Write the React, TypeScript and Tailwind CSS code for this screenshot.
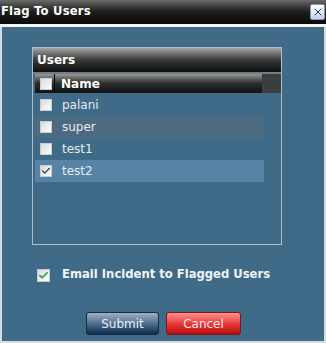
import { Check, X } from "lucide-react";

const users = [
  { name: "palani", checked: false, bg: "" },
  { name: "super", checked: false, bg: "bg-[#4d6b80]" },
  { name: "test1", checked: false, bg: "" },
  { name: "test2", checked: true, bg: "bg-[#5683a6]" },
];

const font = { fontFamily: "Verdana, 'DejaVu Sans', sans-serif" };

function Box({ checked }: { checked?: boolean }) {
  return (
    <div className="w-[12px] h-[12px] border border-[#c9ccd0] bg-gradient-to-br from-[#d8dadd] to-[#ffffff] flex items-center justify-center">
      {checked && <Check size={10} strokeWidth={3} className="text-[#333a66]" />}
    </div>
  );
}

export default function App() {
  return (
    <div className="w-[326px] h-[343px] flex flex-col bg-[#d5dde3]" style={font}>
      <div className="h-[24px] flex items-center justify-between bg-gradient-to-b from-[#6b6b6b] via-[#1c1c1c] to-[#0a0a0a] px-[1px]">
        <span className="text-white font-bold text-[11.6px] tracking-[0.2px]">Flag To Users</span>
        <div className="w-[15px] h-[16px] rounded-[2px] bg-gradient-to-b from-[#ffffff] to-[#c2d0e6] border border-[#8a9ab5] flex items-center justify-center">
          <X size={12} strokeWidth={2} className="text-[#2b3550]" />
        </div>
      </div>
      <div className="h-[3px] bg-[#f4f5f6]" />
      <div className="flex-1 mx-[2px] mb-[2px] bg-[#3f6b88] flex flex-col pl-[30px] pt-[20px]">
        <div className="w-[250px] h-[198px] border border-[#aebdc8] flex flex-col">
          <div className="h-[24px] bg-gradient-to-b from-[#a5a5a5] via-[#3a3a3a] to-[#101010] flex items-center pl-[4px]">
            <span className="text-white font-bold text-[12px]">Users</span>
          </div>
          <div className="h-[2px] bg-[#6c7e8a]" />
          <div className="flex pl-[2px]">
            <div className="w-[227px] h-[19px] bg-gradient-to-b from-[#9a9a9a] via-[#2c2c2c] to-[#121212] flex items-center">
              <div className="w-[19px] flex justify-center pl-[2px]">
                <Box />
              </div>
              <div className="w-[1px] h-full bg-black" />
              <span className="ml-[6px] text-white font-bold text-[12px]">Name</span>
            </div>
            <div className="w-[19px] h-[19px] bg-[#3c3d3e]" />
          </div>
          <div className="flex flex-col pl-[2px] pt-[1px]">
            {users.map((u) => (
              <div key={u.name} className={`w-[229px] h-[22px] flex items-center ${u.bg}`}>
                <div className="w-[19px] flex justify-center pl-[2px]">
                  <Box checked={u.checked} />
                </div>
                <span className="ml-[8px] text-[#e4ecf2] text-[12px]">{u.name}</span>
              </div>
            ))}
          </div>
        </div>
        <div className="flex items-center mt-[23px] ml-[5px] h-[14px]">
          <div className="w-[13px] h-[13px] bg-gradient-to-br from-[#d6d9dc] to-white border border-[#c8cbce] flex items-center justify-center">
            <Check size={11} strokeWidth={3.5} className="text-[#23a03a]" />
          </div>
          <span className="ml-[12px] text-[#f0f4f7] font-bold text-[11.6px]">Email Incident to Flagged Users</span>
        </div>
        <div className="flex mt-[30px] ml-[54px] gap-[7px]">
          <button className="w-[73px] h-[23px] rounded-[3px] border border-[#1b2a3c] bg-gradient-to-b from-[#9fb1c2] via-[#52708d] to-[#0c2b52] text-[#e8eef4] text-[12px]">
            Submit
          </button>
          <button className="w-[75px] h-[23px] rounded-[3px] border border-[#7a1a1a] bg-gradient-to-b from-[#ff9090] via-[#e8383a] to-[#b80c0c] text-[#ffe6e6] text-[12px]">
            Cancel
          </button>
        </div>
      </div>
    </div>
  );
}
